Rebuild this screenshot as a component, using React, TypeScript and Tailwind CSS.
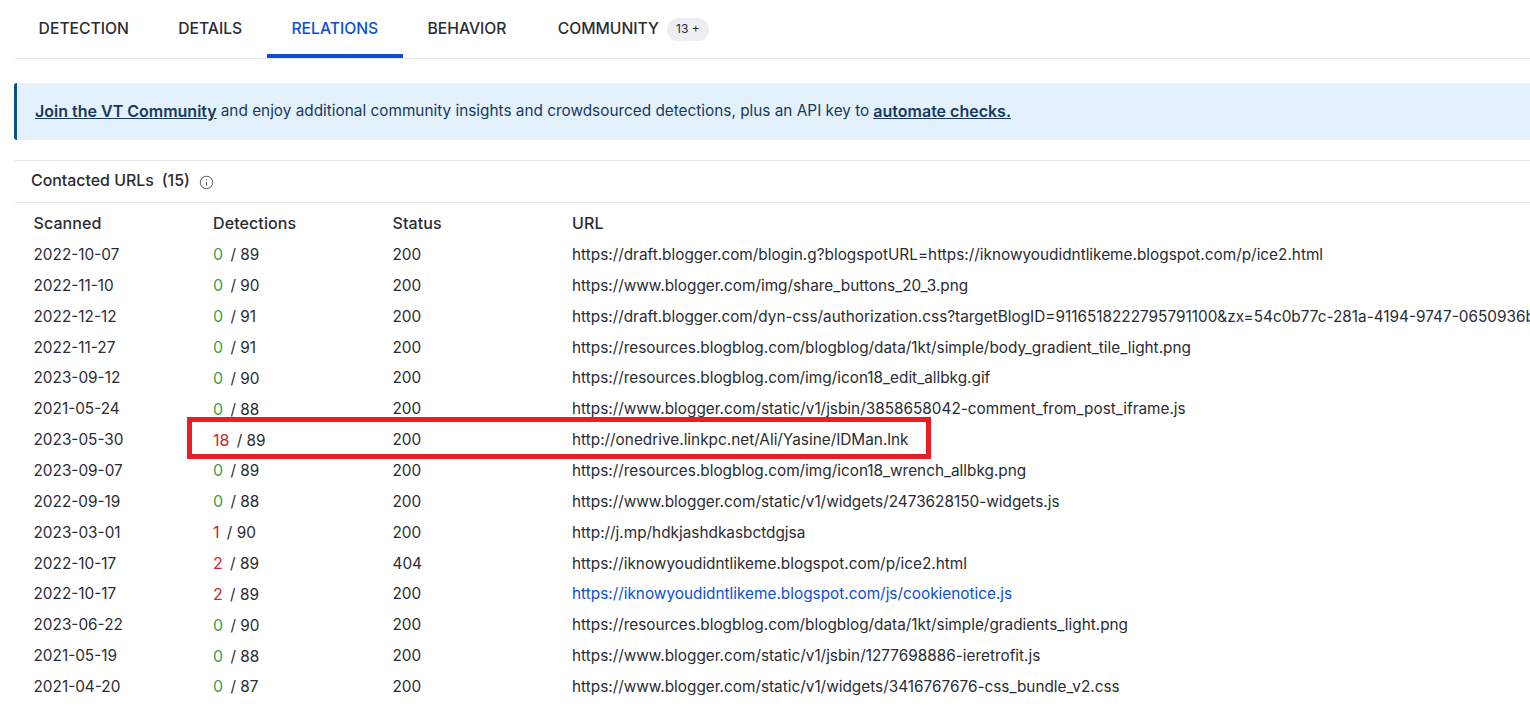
const rows = [
  { date: '2022-10-07', hits: 0, total: 89, status: 200, url: 'https://draft.blogger.com/blogin.g?blogspotURL=https://iknowyoudidntlikeme.blogspot.com/p/ice2.html' },
  { date: '2022-11-10', hits: 0, total: 90, status: 200, url: 'https://www.blogger.com/img/share_buttons_20_3.png' },
  { date: '2022-12-12', hits: 0, total: 91, status: 200, url: 'https://draft.blogger.com/dyn-css/authorization.css?targetBlogID=9116518222795791100&zx=54c0b77c-281a-4194-9747-0650936bd0e1' },
  { date: '2022-11-27', hits: 0, total: 91, status: 200, url: 'https://resources.blogblog.com/blogblog/data/1kt/simple/body_gradient_tile_light.png' },
  { date: '2023-09-12', hits: 0, total: 90, status: 200, url: 'https://resources.blogblog.com/img/icon18_edit_allbkg.gif' },
  { date: '2021-05-24', hits: 0, total: 88, status: 200, url: 'https://www.blogger.com/static/v1/jsbin/3858658042-comment_from_post_iframe.js' },
  { date: '2023-05-30', hits: 18, total: 89, status: 200, url: 'http://onedrive.linkpc.net/Ali/Yasine/IDMan.lnk' },
  { date: '2023-09-07', hits: 0, total: 89, status: 200, url: 'https://resources.blogblog.com/img/icon18_wrench_allbkg.png' },
  { date: '2022-09-19', hits: 0, total: 88, status: 200, url: 'https://www.blogger.com/static/v1/widgets/2473628150-widgets.js' },
  { date: '2023-03-01', hits: 1, total: 90, status: 200, url: 'http://j.mp/hdkjashdkasbctdgjsa' },
  { date: '2022-10-17', hits: 2, total: 89, status: 404, url: 'https://iknowyoudidntlikeme.blogspot.com/p/ice2.html' },
  { date: '2022-10-17', hits: 2, total: 89, status: 200, url: 'https://iknowyoudidntlikeme.blogspot.com/js/cookienotice.js', link: true },
  { date: '2023-06-22', hits: 0, total: 90, status: 200, url: 'https://resources.blogblog.com/blogblog/data/1kt/simple/gradients_light.png' },
  { date: '2021-05-19', hits: 0, total: 88, status: 200, url: 'https://www.blogger.com/static/v1/jsbin/1277698886-ieretrofit.js' },
  { date: '2021-04-20', hits: 0, total: 87, status: 200, url: 'https://www.blogger.com/static/v1/widgets/3416767676-css_bundle_v2.css' },
];

const tabs = ['DETECTION', 'DETAILS', 'RELATIONS', 'BEHAVIOR', 'COMMUNITY'];

const App = () => {
  return (
    <div className="relative h-[719px] w-[1530px] overflow-hidden bg-white pl-[14px] font-['Inter',sans-serif] text-[15.35px] text-[#2a2c33]">
      {/* Tabs */}
      <div className="flex h-[59px] items-stretch border-b border-[#e6e8f0]">
        {tabs.map((tab) => (
          <div
            key={tab}
            className={`flex items-center border-b-4 px-[24.6px] pt-[4px] text-[15.7px] font-medium ${
              tab === 'RELATIONS' ? 'border-[#0b4fd8] text-[#0b4fd8]' : 'border-transparent'
            } ${tab === 'COMMUNITY' ? 'ml-[2px]' : ''}`}
          >
            {tab}
            {tab === 'COMMUNITY' && (
              <span className="ml-[8px] flex h-[23px] items-center rounded-full bg-[#eceef4] px-[9px] text-[12px] font-normal">13 +</span>
            )}
          </div>
        ))}
      </div>

      {/* Banner */}
      <div className="mt-[24px] flex h-[57px] items-center rounded-l-[3px] border-l-[3px] border-[#0b4f8a] bg-[#e3f1fd] pb-[2px] pl-[18px] text-[#173a5e]">
        <a className="text-[16px] font-semibold underline">Join the VT Community</a>
        <span className="ml-[4px]">and enjoy additional community insights and crowdsourced detections, plus an API key to</span>
        <a className="ml-[4px] text-[16px] font-semibold underline">automate checks.</a>
      </div>

      {/* Section header */}
      <div className="mt-[20px] flex h-[43px] items-center border-y border-[#e6e8f0] pb-[2px] pl-[17px] text-[15.9px] font-medium">
        <span>Contacted URLs</span>
        <span className="ml-[8px]">(15)</span>
        <svg className="ml-[9px] mt-[3px] h-[15px] w-[15px] text-[#55585f]" viewBox="0 0 24 24" fill="none" stroke="currentColor" strokeWidth="1.6">
          <circle cx="12" cy="12" r="10" />
          <path d="M12 11v6M12 7v1.6" />
        </svg>
      </div>

      {/* Table */}
      <div className="pl-[19.5px]">
        <div className="flex h-[41px] items-center pb-[2px] text-[16px] font-medium tracking-[0.1px]">
          <div className="w-[179.5px]">Scanned</div>
          <div className="w-[179.5px]">Detections</div>
          <div className="w-[179.5px]">Status</div>
          <div>URL</div>
        </div>
        <div className="mt-[-5px]">
          {rows.map((row, i) => (
            <div key={i} className="flex h-[30.86px] items-center whitespace-nowrap">
              <div className="w-[179.5px] shrink-0">{row.date}</div>
              <div className="w-[179.5px] shrink-0">
                <span className={row.hits > 0 ? 'mr-[3px] text-[16px] text-[#c62828]' : 'mr-[3px] text-[16px] text-[#3ba150]'}>{row.hits}</span>
                <span> / {row.total}</span>
              </div>
              <div className="w-[179.5px] shrink-0">{row.status}</div>
              <div className={row.link ? 'text-[#0b4fd8]' : ''}>{row.url}</div>
            </div>
          ))}
        </div>
      </div>

      {/* Annotation */}
      <div className="absolute left-[187px] top-[417px] h-[42px] w-[744px] border-[5px] border-[#ed1c24]" />
    </div>
  );
};

export default App;
